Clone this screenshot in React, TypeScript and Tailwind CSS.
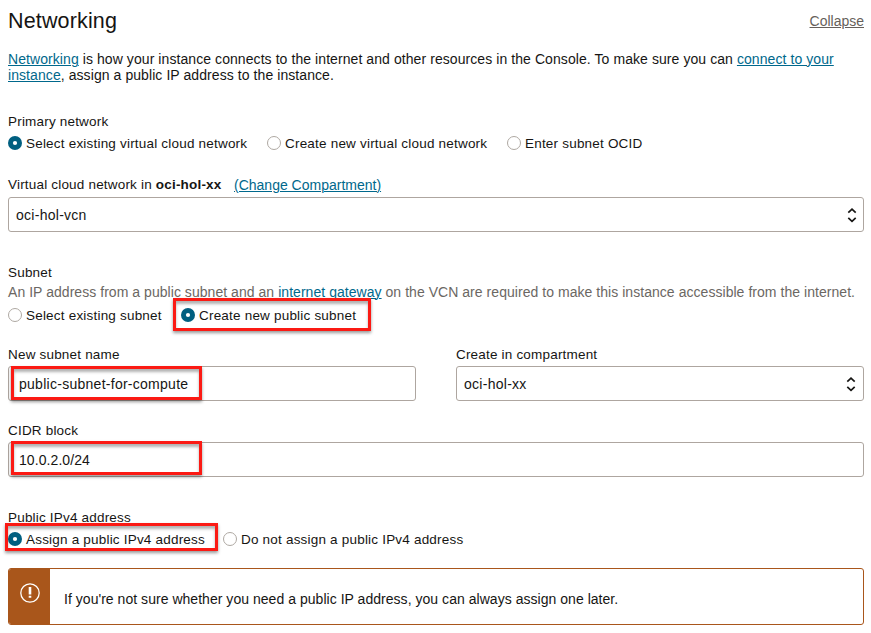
import type { ReactNode } from 'react';

function Link({ children }: { children: ReactNode }) {
  return (
    <a className="cursor-pointer text-[#00688c] underline decoration-1 underline-offset-1">{children}</a>
  );
}

function Label({ children, className = '' }: { children: ReactNode; className?: string }) {
  return <div className={`text-[13.5px] tracking-[0.19px] ${className}`}>{children}</div>;
}

function Radio({ checked, children, className = '' }: { checked?: boolean; children: ReactNode; className?: string }) {
  return (
    <label className={`flex h-4 items-center whitespace-nowrap ${className}`}>
      <svg width="14" height="14" viewBox="0 0 14 14" className="mr-1 shrink-0">
        {checked ? (
          <>
            <circle cx="7" cy="7" r="7" fill="#005f80" />
            <circle cx="7" cy="7" r="2.1" fill="#fff" />
          </>
        ) : (
          <circle cx="7" cy="7" r="6.5" fill="#fff" stroke="#aea8a2" />
        )}
      </svg>
      <span className="pt-[2px] text-[13.5px] tracking-[0.2px]">{children}</span>
    </label>
  );
}

function Chevrons() {
  return (
    <svg width="10" height="16" viewBox="0 0 10 16" fill="none" stroke="#161513" strokeWidth="1.7" className="shrink-0">
      <path d="M1.3 5.6 5 2.1l3.7 3.5M1.3 10.9 5 14.4l3.7-3.5" />
    </svg>
  );
}

function Field({ children, select, className = '' }: { children: ReactNode; select?: boolean; className?: string }) {
  return (
    <div className={`relative flex h-[35px] items-center justify-between rounded-[3px] border border-[#aea6a0] bg-white ${className}`}>
      <span className="tracking-[0.27px]">{children}</span>
      {select && <Chevrons />}
    </div>
  );
}

function Highlight({ className }: { className: string }) {
  return (
    <div
      className={`pointer-events-none absolute border-[3px] border-[#fb1a14] shadow-[0_2px_3px_rgba(0,0,0,0.4),inset_0_3px_3px_rgba(0,0,0,0.3)] ${className}`}
    />
  );
}

export default function App() {
  return (
    <main className="h-[633px] w-[871px] overflow-hidden bg-white pl-2 pr-[7px] font-['Liberation_Sans',Arial,sans-serif] text-[14px] leading-4 text-[#161513]">
      <header className="flex h-[51px] items-start justify-between pt-2">
        <h2 className="text-[21.5px] leading-[26px] tracking-[0.15px]">Networking</h2>
        <a className="mt-[5px] cursor-pointer text-[#665f5b] underline underline-offset-1">Collapse</a>
      </header>

      <p className="whitespace-nowrap tracking-[0.075px]">
        <Link>Networking</Link> is how your instance connects to the internet and other resources in the Console. To
        make sure you can <Link>connect to your</Link>
        <br />
        <Link>instance</Link>, assign a public IP address to the instance.
      </p>

      <section className="pt-[31px]">
        <Label>Primary network</Label>
        <div className="mt-[5px] flex">
          <Radio checked className="w-[259px]">Select existing virtual cloud network</Radio>
          <Radio className="w-[240px]">Create new virtual cloud network</Radio>
          <Radio>Enter subnet OCID</Radio>
        </div>
      </section>

      <section className="pt-[25px]">
        <div className="flex h-[21px]">
          <Label className="w-[226px] pt-px">
            Virtual cloud network in <b>oci-hol-xx</b>
          </Label>
          <span className="pt-px">
            <Link>(Change Compartment)</Link>
          </span>
        </div>
        <Field select className="pl-[7px] pr-[6px]">oci-hol-vcn</Field>
      </section>

      <section className="pt-[33px]">
        <Label>Subnet</Label>
        <p className="mt-[3px] whitespace-nowrap tracking-[0.045px] text-[#6b6763]">
          An IP address from a public subnet and an <Link>internet gateway</Link> on the VCN are required to make this
          instance accessible from the internet.
        </p>
        <div className="mt-[7px] flex">
          <Radio className="w-[173px]">Select existing subnet</Radio>
          <div className="relative">
            <Radio checked>Create new public subnet</Radio>
            <Highlight className="-left-2 -top-[9px] h-[33px] w-[198px]" />
          </div>
        </div>
      </section>

      <section className="grid grid-cols-[408px_408px] gap-x-10 pt-6">
        <div>
          <Label className="mb-[3px]">New subnet name</Label>
          <Field className="pl-[10px]">
            public-subnet-for-compute
            <Highlight className="-top-px left-[2px] h-[34px] w-[191px]" />
          </Field>
        </div>
        <div>
          <Label className="mb-[3px]">Create in compartment</Label>
          <Field select className="pl-[7px] pr-[7px]">oci-hol-xx</Field>
        </div>
      </section>

      <section className="pt-[22px]">
        <Label className="mb-[3px]">CIDR block</Label>
        <Field className="pl-[10px]">
          <span className="tracking-[0.08px]">10.0.2.0/24</span>
          <Highlight className="-top-[2px] left-[2px] h-[34px] w-[191px]" />
        </Field>
      </section>

      <section className="pt-[33px]">
        <Label>Public IPv4 address</Label>
        <div className="mt-[5px] flex">
          <div className="relative w-[215px]">
            <Radio checked>Assign a public IPv4 address</Radio>
            <Highlight className="-left-[3px] -top-2 h-7 w-[213px]" />
          </div>
          <Radio>Do not assign a public IPv4 address</Radio>
        </div>
      </section>

      <section className="mt-[21px] flex h-[57px] overflow-hidden rounded-[3px] border border-[#a9561b]">
        <div className="flex w-[41px] shrink-0 justify-center bg-[#a9561b] pt-[14px]">
          <svg width="20" height="20" viewBox="0 0 20 20" fill="none" stroke="#fff">
            <circle cx="10" cy="10" r="9.2" strokeWidth="1.3" />
            <path d="M10 4v7.6M10 12.8v2" strokeWidth="2.6" />
          </svg>
        </div>
        <p className="pl-[14px] pt-[22px] tracking-[0.035px]">
          If you're not sure whether you need a public IP address, you can always assign one later.
        </p>
      </section>
    </main>
  );
}
